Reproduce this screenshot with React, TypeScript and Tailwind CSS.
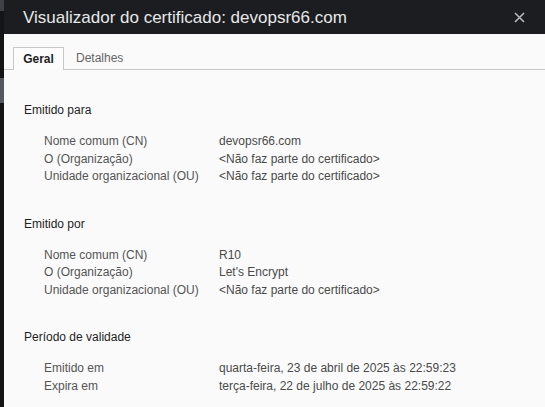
const font = { fontFamily: '"Liberation Sans", Arial, sans-serif' }

type Row = [string, string]

const sections: { title: string; rows: Row[] }[] = [
  {
    title: "Emitido para",
    rows: [
      ["Nome comum (CN)", "devopsr66.com"],
      ["O (Organização)", "<Não faz parte do certificado>"],
      ["Unidade organizacional (OU)", "<Não faz parte do certificado>"],
    ],
  },
  {
    title: "Emitido por",
    rows: [
      ["Nome comum (CN)", "R10"],
      ["O (Organização)", "Let's Encrypt"],
      ["Unidade organizacional (OU)", "<Não faz parte do certificado>"],
    ],
  },
  {
    title: "Período de validade",
    rows: [
      ["Emitido em", "quarta-feira, 23 de abril de 2025 às 22:59:23"],
      ["Expira em", "terça-feira, 22 de julho de 2025 às 22:59:22"],
    ],
  },
]

const Section = ({ title, rows }: { title: string; rows: Row[] }) => (
  <div className="mb-[29px]">
    <p className="h-[18px] text-[12px] leading-[18px] text-[#1e1e1e]">{title}</p>
    <div className="mt-[14px] pl-5">
      {rows.map(([label, value]) => (
        <div key={label} className="flex h-[17.5px] items-center text-[12px] leading-[17.5px]">
          <span className="w-[175px] shrink-0 text-[#555]">{label}</span>
          <span className="text-[#4a4a4a]">{value}</span>
        </div>
      ))}
    </div>
  </div>
)

export default function App() {
  return (
    <div className="flex h-[407px] w-[545px] overflow-hidden bg-[#fafafa]" style={font}>
      <div className="flex w-[4px] shrink-0 flex-col bg-[#141517]">
        <div className="h-[11px] bg-[#3d4046]" />
        <div className="mt-[67px] h-[25px] bg-[#55585c]" />
      </div>
      <div className="flex min-w-0 flex-1 flex-col">
        <div className="flex h-[34px] shrink-0 items-center justify-between bg-[#1b1d21] pl-[19px] pr-[20px]">
          <h1 className="mt-[1px] text-[17px] leading-none text-[#e8e8e8]">
            Visualizador do certificado: devopsr66.com
          </h1>
          <svg width="11" height="11" viewBox="0 0 11 11" className="mt-[1px]">
            <path d="M1 1L10 10M10 1L1 10" stroke="#b8b8b8" strokeWidth="1.6" />
          </svg>
        </div>
        <div className="mt-[14px] flex h-[22px] shrink-0 items-end border-b border-[#c8c8c8]">
          <div className="ml-[9px] -mb-px flex h-[23px] w-[51px] items-center justify-center border border-b-0 border-[#c8c8c8] bg-[#fcfcfc] text-[12px] font-bold text-[#1e1e1e]">
            Geral
          </div>
          <div className="flex h-[22px] items-center px-[12px] text-[12px] text-[#666]">
            Detalhes
          </div>
        </div>
        <div className="pl-[20px] pt-[31px]">
          {sections.map((s) => (
            <Section key={s.title} title={s.title} rows={s.rows} />
          ))}
        </div>
      </div>
    </div>
  )
}
